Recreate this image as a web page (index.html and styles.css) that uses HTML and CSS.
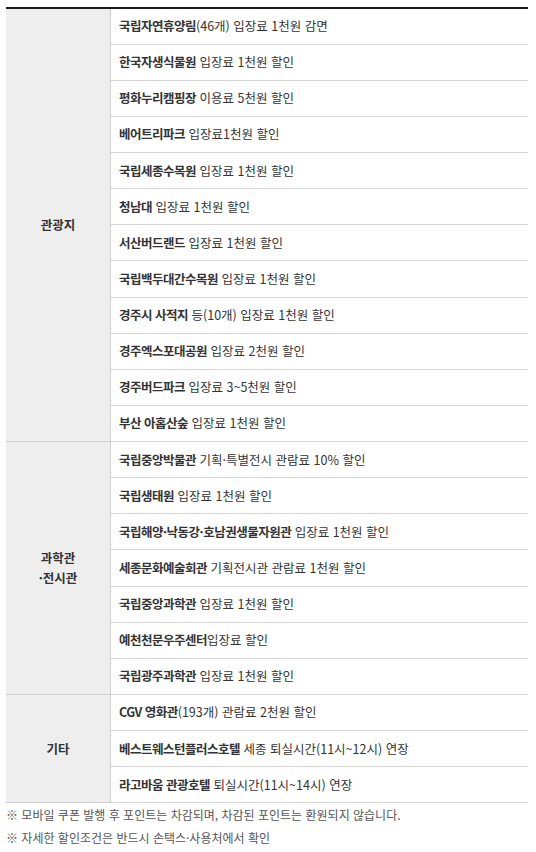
FILE: index.html
```html
<!DOCTYPE html>
<html lang="ko">
<head>
<meta charset="utf-8">
<link rel="stylesheet" href="styles.css">
</head>
<body>
<div class="wrap">
<table class="benefit">
<tbody class="grp">
<tr><th rowspan="12">관광지</th><td><b>국립자연휴양림</b>(46개) 입장료 1천원 감면</td></tr>
<tr><td><b>한국자생식물원</b> 입장료 1천원 할인</td></tr>
<tr><td><b>평화누리캠핑장</b> 이용료 5천원 할인</td></tr>
<tr><td><b>베어트리파크</b> 입장료1천원 할인</td></tr>
<tr><td><b>국립세종수목원</b> 입장료 1천원 할인</td></tr>
<tr><td><b>청남대</b> 입장료 1천원 할인</td></tr>
<tr><td><b>서산버드랜드</b> 입장료 1천원 할인</td></tr>
<tr><td><b>국립백두대간수목원</b> 입장료 1천원 할인</td></tr>
<tr><td><b>경주시 사적지</b> 등(10개) 입장료 1천원 할인</td></tr>
<tr><td><b>경주엑스포대공원</b> 입장료 2천원 할인</td></tr>
<tr><td><b>경주버드파크</b> 입장료 3~5천원 할인</td></tr>
<tr><td><b>부산 아홉산숲</b> 입장료 1천원 할인</td></tr>
</tbody>
<tbody class="grp">
<tr><th rowspan="7">과학관<br>·전시관</th><td><b>국립중앙박물관</b> 기획·특별전시 관람료 10% 할인</td></tr>
<tr><td><b>국립생태원</b> 입장료 1천원 할인</td></tr>
<tr><td><b>국립해양·낙동강·호남권생물자원관</b> 입장료 1천원 할인</td></tr>
<tr><td><b>세종문화예술회관</b> 기획전시관 관람료 1천원 할인</td></tr>
<tr><td><b>국립중앙과학관</b> 입장료 1천원 할인</td></tr>
<tr><td><b>예천천문우주센터</b>입장료 할인</td></tr>
<tr><td><b>국립광주과학관</b> 입장료 1천원 할인</td></tr>
</tbody>
<tbody class="grp">
<tr><th rowspan="3">기타</th><td><b>CGV 영화관</b>(193개) 관람료 2천원 할인</td></tr>
<tr><td><b>베스트웨스턴플러스호텔</b> 세종 퇴실시간(11시~12시) 연장</td></tr>
<tr><td><b>라고바움 관광호텔</b> 퇴실시간(11시~14시) 연장</td></tr>
</tbody>
</table>
<ul class="notes">
<li>※ 모바일 쿠폰 발행 후 포인트는 차감되며, 차감된 포인트는 환원되지 않습니다.</li>
<li>※ 자세한 할인조건은 반드시 손택스·사용처에서 확인</li>
</ul>
</div>
</body>
</html>
```

FILE: styles.css
```css
html, body {
  margin: 0;
  padding: 0;
  background: #fff;
}
body {
  font-family: "Noto Sans CJK KR", "Noto Sans", sans-serif;
  color: #333;
  font-size: 12.5px;
}
.wrap {
  padding: 7px 8px 0 6px;
}
.benefit {
  width: 100%;
  border-collapse: collapse;
  border-top: 2px solid #1a1a1a;
}
.benefit th {
  width: 104px;
  background: #eeeeee;
  font-weight: 700;
  color: #333;
  text-align: center;
  vertical-align: middle;
  border-right: 1px solid #d0d0d0;
  border-bottom: 1px solid #d0d0d0;
  padding: 0;
  line-height: 20px;
}
.benefit td {
  height: 36.14px;
  padding: 0 8px;
  border-bottom: 1px solid #d4d4d4;
  line-height: 16px;
  vertical-align: middle;
  box-sizing: border-box;
}
.benefit td b {
  font-weight: 700;
  color: #333;
  letter-spacing: -0.5px;
}
.notes {
  list-style: none;
  margin: 0;
  padding: 0;
  color: #555;
  font-size: 12px;
}
.notes li {
  height: 23px;
  line-height: 23px;
}
```
